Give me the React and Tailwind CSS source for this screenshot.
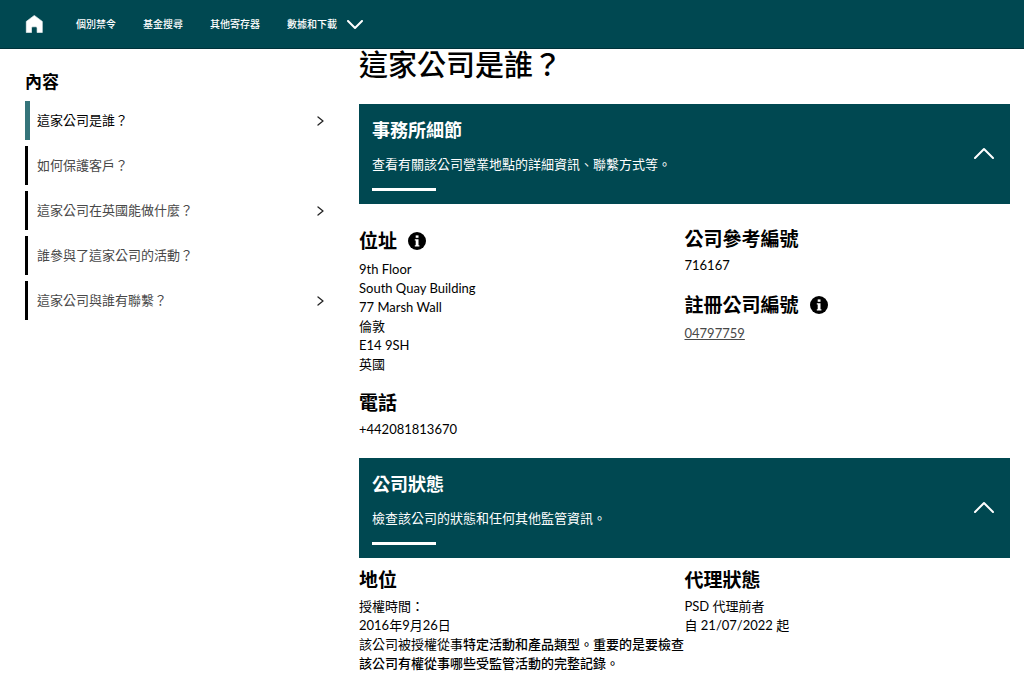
import React from 'react';

const navLinks = ['個別禁令', '基金搜尋', '其他寄存器'];

const contents = [
  { label: '這家公司是誰？', current: true, expandable: true },
  { label: '如何保護客戶？' },
  { label: '這家公司在英國能做什麼？', expandable: true },
  { label: '誰參與了這家公司的活動？' },
  { label: '這家公司與誰有聯繫？', expandable: true },
];

function HomeIcon() {
  return (
    <svg width="18" height="18" viewBox="0 0 18 18" fill="currentColor" aria-hidden="true">
      <path
        d="M9.3 0.4 17.3 6.4V17.6H12.1V13Q12.1 11.8 10.9 11.8H7.7Q6.5 11.8 6.5 13V17.6H1.3V6.4Z"
        stroke="currentColor"
        strokeWidth="0.6"
        strokeLinejoin="round"
      />
    </svg>
  );
}

function Chevron({ className, points, width, height, stroke }) {
  return (
    <svg
      className={className}
      width={width}
      height={height}
      viewBox={`0 0 ${width} ${height}`}
      fill="none"
      stroke="currentColor"
      strokeWidth={stroke}
      strokeLinecap="round"
      strokeLinejoin="round"
      aria-hidden="true"
    >
      <polyline points={points} />
    </svg>
  );
}

function InfoButton({ label }) {
  return (
    <button type="button" aria-label={label} className="flex shrink-0">
      <svg width="18" height="18" viewBox="0 0 18 18" aria-hidden="true">
        <circle cx="9" cy="9" r="9" fill="#000" />
        <rect x="7.7" y="3.4" width="2.8" height="2.4" fill="#fff" />
        <path d="M6.8 7.2H10.5V13.2H11.4V14.6H6.8V13.2H7.7V8.6H6.8Z" fill="#fff" />
      </svg>
    </button>
  );
}

function Heading({ children, info }) {
  if (info) {
    return (
      <div className="flex items-center gap-[11px]">
        <h3 className="text-[19px] leading-7 font-bold">{children}</h3>
        <InfoButton label={info} />
      </div>
    );
  }
  return <h3 className="text-[19px] leading-6 font-bold">{children}</h3>;
}

function Field({ title, info, children }) {
  return (
    <section className="flex flex-col gap-[5px]">
      <Heading info={info}>{title}</Heading>
      <div>{children}</div>
    </section>
  );
}

function Panel({ title, summary }) {
  return (
    <button
      type="button"
      aria-expanded="true"
      className="flex w-full items-center justify-between bg-[#004851] pt-3.5 pr-4 pb-[13px] pl-[13px] text-left text-white"
    >
      <span className="flex flex-col">
        <span className="text-[18px] leading-6 font-bold">{title}</span>
        <span className="mt-[13px]">{summary}</span>
        <span className="mt-3.5 h-[3px] w-16 bg-white" />
      </span>
      <Chevron className="mb-1" width={20} height={12} points="1,11 10,2 19,11" stroke={2} />
    </button>
  );
}

export default function App() {
  return (
    <div
      lang="zh-Hant"
      className="min-h-screen bg-white text-[13px] leading-[19px] text-black [font-family:Lato,'Noto_Sans_CJK_TC',sans-serif]"
    >
      <header className="border-b border-[#00323a] bg-[#004851] text-white">
        <nav className="flex h-12 items-center gap-[27px] pl-[25px] text-[10px] font-medium">
          <a href="#home" aria-label="首頁" className="mr-1.5">
            <HomeIcon />
          </a>
          {navLinks.map((label) => (
            <a key={label} href="#nav">
              {label}
            </a>
          ))}
          <button type="button" className="flex items-center gap-2.5">
            數據和下載
            <Chevron className="mt-0.5" width={16} height={10} points="1,1 8,8 15,1" stroke={2} />
          </button>
        </nav>
      </header>

      <div className="grid grid-cols-[minmax(0,300fr)_minmax(0,651fr)] gap-[34px] pr-3.5 pl-[25px]">
        <aside className="pt-[21px]">
          <h2 className="text-[17px] leading-6 font-bold">內容</h2>
          <ul className="mt-[7px] flex flex-col gap-1.5">
            {contents.map((item) => (
              <li key={item.label}>
                <a
                  href="#section"
                  aria-current={item.current ? 'true' : undefined}
                  className={
                    item.current
                      ? 'flex items-center justify-between border-l-[5px] border-[#35747a] py-2.5 pl-[7px] text-black'
                      : 'flex items-center justify-between border-l-[3px] border-black py-2.5 pl-[9px] text-[#484848]'
                  }
                >
                  {item.label}
                  {item.expandable && (
                    <Chevron className="text-[#222]" width={8} height={10} points="1,1 6,5 1,9" stroke={1.3} />
                  )}
                </a>
              </li>
            ))}
          </ul>
        </aside>

        <main>
          <h1 className="text-[29px] leading-8 font-medium">這家公司是誰？</h1>

          <div className="mt-[23px]">
            <Panel title="事務所細節" summary="查看有關該公司營業地點的詳細資訊、聯繫方式等。" />
            <div className="grid grid-cols-2 pt-[23px] pb-[19px]">
              <div className="flex flex-col gap-[17px]">
                <Field title="位址" info="位址說明">
                  <address className="not-italic">
                    <p>9th Floor</p>
                    <p>South Quay Building</p>
                    <p>77 Marsh Wall</p>
                    <p>倫敦</p>
                    <p>E14 9SH</p>
                    <p>英國</p>
                  </address>
                </Field>
                <Field title="電話">
                  <p>+442081813670</p>
                </Field>
              </div>
              <div className="flex flex-col gap-4">
                <Field title="公司參考編號">
                  <p>716167</p>
                </Field>
                <Field title="註冊公司編號" info="註冊公司編號說明">
                  <a href="#company" className="text-[#484848] underline">
                    04797759
                  </a>
                </Field>
              </div>
            </div>
          </div>

          <div>
            <Panel title="公司狀態" summary="檢查該公司的狀態和任何其他監管資訊。" />
            <div className="grid grid-cols-2 pt-2.5">
              <Field title="地位">
                <p>授權時間：</p>
                <p>2016年9月26日</p>
                <p>
                  該公司被授權從事
                  <strong className="font-medium">特定活動和產品類型。重要的是要檢查</strong>
                  <strong className="font-medium">該公司有權從事哪些受監管活動的完整記錄。</strong>
                </p>
              </Field>
              <Field title="代理狀態">
                <p>PSD 代理前者</p>
                <p>自 21/07/2022 起</p>
              </Field>
            </div>
          </div>
        </main>
      </div>
    </div>
  );
}
